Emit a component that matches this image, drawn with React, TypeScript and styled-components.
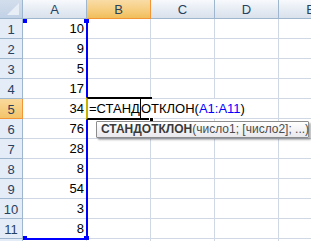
import styled, { createGlobalStyle } from "styled-components";

const GlobalStyle = createGlobalStyle`
  html, body {
    margin: 0;
    padding: 0;
    background: #ffffff;
    overflow: hidden;
  }
  * {
    box-sizing: border-box;
  }
`;

const columns = ["A", "B", "C", "D", "E"];
const values = ["10", "9", "5", "17", "34", "76", "28", "8", "54", "3", "8", ""];
const activeRow = 5;
const activeCol = "B";

export default function App() {
  return (
    <Sheet>
      <GlobalStyle />
      <Grid>
        <Corner>
          <CornerMark />
        </Corner>
        {columns.map((c) => (
          <ColHeader key={c} $active={c === activeCol}>
            {c}
          </ColHeader>
        ))}
        {values.map((v, i) => (
          <Row key={i}>
            <RowHeader $active={i + 1 === activeRow}>
              {i < 11 ? i + 1 : ""}
            </RowHeader>
            <Cell>{v}</Cell>
            <Cell />
            <Cell />
            <Cell />
            <Cell />
          </Row>
        ))}
      </Grid>

      <RangeBox>
        <HandleRow>
          <Handle />
          <Handle $wide />
        </HandleRow>
        <HandleRow $bottom>
          <Handle />
          <Handle $wide />
        </HandleRow>
      </RangeBox>

      <Editor>
        <EditText>
          =СТАНД
          <Caret />
          ОТКЛОН(<RefText>A1:A11</RefText>)
        </EditText>
        <FillHandle />
      </Editor>

      <Tooltip>
        <b>СТАНДОТКЛОН</b>(число1; [число2]; ...)
      </Tooltip>
    </Sheet>
  );
}

const Sheet = styled.div`
  position: relative;
  width: 311px;
  height: 241px;
  overflow: hidden;
  font-family: "Liberation Sans", Arial, sans-serif;
  font-size: 13px;
  color: #000;
`;

const Grid = styled.div`
  display: grid;
  grid-template-columns: 23px 64px 64px 64px 64px 64px;
  grid-auto-rows: 20px;
  grid-template-rows: 19px;
`;

const Row = styled.div`
  display: contents;
`;

const Corner = styled.div`
  display: flex;
  align-items: flex-end;
  justify-content: flex-end;
  padding: 0 3px 3px 0;
  background: linear-gradient(#d3deec, #c1d1e6);
  border-right: 1px solid #9eb6ce;
  border-bottom: 1px solid #9eb6ce;
`;

const CornerMark = styled.div`
  width: 0;
  height: 0;
  border-left: 12px solid transparent;
  border-bottom: 12px solid #e8eef6;
`;

const ColHeader = styled.div<{ $active?: boolean }>`
  display: flex;
  align-items: center;
  justify-content: center;
  padding-top: 1px;
  color: #27415f;
  background: ${(p) =>
    p.$active
      ? "linear-gradient(#f9dca6, #f6cd80 55%, #f1bf5b)"
      : "linear-gradient(#f7f9fc, #e4eaf2 60%, #d9e1ec)"};
  border-right: 1px solid ${(p) => (p.$active ? "#f29536" : "#9eb6ce")};
  border-bottom: 1px solid ${(p) => (p.$active ? "#f29536" : "#9eb6ce")};
`;

const RowHeader = styled.div<{ $active?: boolean }>`
  display: flex;
  align-items: center;
  justify-content: center;
  padding-top: 1px;
  color: #27415f;
  background: ${(p) =>
    p.$active ? "linear-gradient(#f9d99c, #f3c56a)" : "#e4ecf7"};
  border-right: 1px solid ${(p) => (p.$active ? "#f29536" : "#9eb6ce")};
  border-bottom: 1px solid ${(p) => (p.$active ? "#f29536" : "#9eb6ce")};
`;

const Cell = styled.div`
  display: flex;
  align-items: flex-end;
  justify-content: flex-end;
  padding: 0 2px 2px 0;
  background: #fff;
  border-right: 1px solid #d0d7e5;
  border-bottom: 1px solid #d0d7e5;
  line-height: 15px;
`;

const RangeBox = styled.div`
  position: absolute;
  left: 23px;
  top: 19px;
  width: 65px;
  height: 221px;
  display: flex;
  flex-direction: column;
  justify-content: space-between;
  border-right: 2px solid #0000ff;
  border-bottom: 2px solid #0000ff;
`;

const HandleRow = styled.div<{ $bottom?: boolean }>`
  display: flex;
  justify-content: space-between;
  margin: ${(p) => (p.$bottom ? "0 -3px -2px 0" : "0 -3px 0 0")};
`;

const Handle = styled.div<{ $wide?: boolean }>`
  width: ${(p) => (p.$wide ? 5 : 4)}px;
  height: 4px;
  background: #0000ff;
`;

const Editor = styled.div`
  position: absolute;
  left: 86px;
  top: 97px;
  width: 66px;
  height: 23px;
  border: 2px solid #000;
  border-left-color: #c8b400;
`;

const EditText = styled.div`
  position: absolute;
  left: 0;
  top: 0;
  width: 160px;
  height: 19px;
  display: flex;
  align-items: center;
  padding: 1px 0 0 1px;
  background: #fff;
  white-space: pre;
  line-height: 16px;
`;

const RefText = styled.span`
  color: #0000ff;
`;

const Caret = styled.span`
  align-self: stretch;
  width: 1px;
  margin: -2px 0 -1px;
  background: #000;
`;

const FillHandle = styled.div`
  position: absolute;
  right: -4px;
  bottom: -4px;
  width: 5px;
  height: 5px;
  background: #000;
  border: 1px solid #fff;
`;

const Tooltip = styled.div`
  position: absolute;
  left: 96px;
  top: 121px;
  width: 213px;
  height: 17px;
  padding: 0 0 0 4px;
  font-size: 12px;
  line-height: 15px;
  white-space: nowrap;
  color: #4c4c4c;
  background: linear-gradient(#ffffff, #e9e9ee);
  border: 1px solid #8d8d8d;
  border-radius: 1px;
  box-shadow: 2px 2px 2px rgba(0, 0, 0, 0.3);

  b {
    color: #3a3a3a;
  }
`;
